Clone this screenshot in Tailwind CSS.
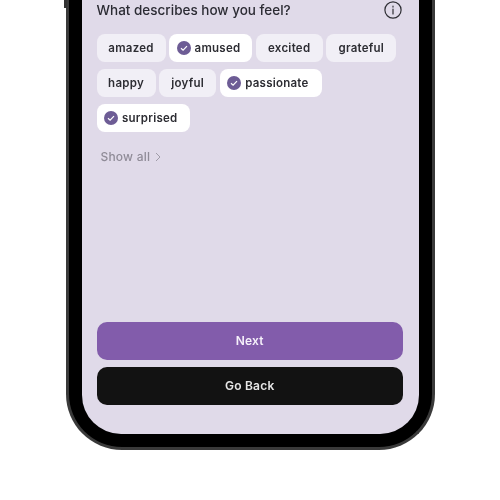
<!DOCTYPE html>
<html><head><meta charset="utf-8">
<script src="https://cdn.jsdelivr.net/npm/@tailwindcss/browser@4"></script>
</head>
<body class="bg-white font-['Inter','Liberation_Sans',sans-serif]">
<div class="w-[500px] h-[500px] overflow-hidden bg-white relative blur-[0.35px]">
  <div class="absolute left-[64px] top-0 w-[3px] h-[8px] bg-[#333]"></div>
  <div class="ml-[66px] w-[369px] h-[450px] bg-black rounded-b-[56px] border-x-[3px] border-b-[3px] border-[#3a3a3a] pl-[13px] pr-[13px] pb-[13px]">
    <div class="h-full bg-[#e0dae9] rounded-b-[39px] pl-[14.5px] pr-[16px] flex flex-col">
      <div class="flex items-center justify-between h-[20px] pr-[1px]">
        <span class="text-[13.5px] font-medium text-[#2b2b33]">What describes how you feel?</span>
        <svg class="w-[18px] h-[18px]" viewBox="0 0 18 18" fill="none" stroke="#2f2f35" stroke-width="1.2"><circle cx="9" cy="9" r="8.1"/><path d="M9 8v5M9 5.2v.9" stroke-linecap="round"/></svg>
      </div>
      <div class="mt-[14px] flex flex-col gap-[7px] text-[11.5px] font-semibold text-[#2d2d33] tracking-[0.25px] leading-[30px]">
        <div class="flex gap-[3.6px]">
          <div class="w-[69px] h-[28px] rounded-[8px] bg-[#f1eff6] flex items-center justify-center">amazed</div>
          <div class="w-[83px] h-[28px] rounded-[8px] bg-white flex items-center pl-[7.5px] gap-[4px]"><svg class="w-[14px] h-[14px]" viewBox="0 0 14 14"><circle cx="7" cy="7" r="7" fill="#6d5c95"/><path d="M4 7.2l2.1 2 3.9-4" fill="none" stroke="#fff" stroke-width="1.2"/></svg>amused</div>
          <div class="w-[67px] h-[28px] rounded-[8px] bg-[#f1eff6] flex items-center justify-center">excited</div>
          <div class="w-[70px] h-[28px] rounded-[8px] bg-[#f1eff6] flex items-center justify-center">grateful</div>
        </div>
        <div class="flex gap-[3.6px]">
          <div class="w-[59px] h-[28px] rounded-[8px] bg-[#f1eff6] flex items-center justify-center">happy</div>
          <div class="w-[57px] h-[28px] rounded-[8px] bg-[#f1eff6] flex items-center justify-center">joyful</div>
          <div class="w-[102px] h-[28px] rounded-[8px] bg-white flex items-center pl-[7.5px] gap-[4px]"><svg class="w-[14px] h-[14px]" viewBox="0 0 14 14"><circle cx="7" cy="7" r="7" fill="#6d5c95"/><path d="M4 7.2l2.1 2 3.9-4" fill="none" stroke="#fff" stroke-width="1.2"/></svg>passionate</div>
        </div>
        <div class="flex">
          <div class="w-[93px] h-[28px] rounded-[8px] bg-white flex items-center pl-[7.5px] gap-[4px]"><svg class="w-[14px] h-[14px]" viewBox="0 0 14 14"><circle cx="7" cy="7" r="7" fill="#6d5c95"/><path d="M4 7.2l2.1 2 3.9-4" fill="none" stroke="#fff" stroke-width="1.2"/></svg>surprised</div>
        </div>
      </div>
      <div class="mt-[17px] ml-[4px] flex items-center gap-[5px] text-[12px] font-medium tracking-[0.2px] text-[#8f8b97] h-[16px]">Show all
        <svg class="w-[6px] h-[10px]" viewBox="0 0 6 10" fill="none" stroke="#a09ca8" stroke-width="1"><path d="M1 1l4 4-4 4"/></svg>
      </div>
      <div class="mt-auto flex flex-col gap-[7px] mb-[29px] text-[12px] font-semibold tracking-[0.2px]">
        <div class="h-[38px] rounded-[10px] bg-[#825cab] text-[#f5f0fa] flex items-center justify-center">Next</div>
        <div class="h-[38px] rounded-[10px] bg-[#121212] text-[#e6e6e6] flex items-center justify-center">Go Back</div>
      </div>
    </div>
  </div>
</div>
</body></html>
